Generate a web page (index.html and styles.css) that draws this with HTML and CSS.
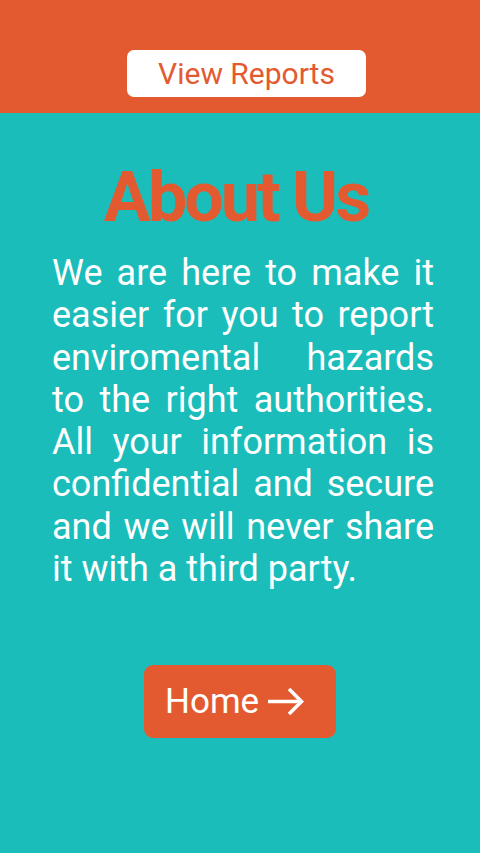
FILE: index.html
```html
<!DOCTYPE html>
<html>
<head>
<meta charset="utf-8">
<link rel="stylesheet" href="styles.css">
</head>
<body>
<header class="top">
  <a class="reports-btn">View Reports</a>
</header>
<main class="content">
  <h1 class="title">About Us</h1>
  <p class="about">We are here to make it easier for you to report enviromental hazards to the right authorities. All your information is confidential and secure and we will never share it with a third party.</p>
  <a class="home-btn">Home
    <svg class="arrow" width="37" height="29" viewBox="0 0 37 29" fill="none" stroke="#fff" stroke-width="3.6" stroke-linecap="butt" stroke-linejoin="miter">
      <path d="M1 14.5 H34"/>
      <path d="M22 2 L34.5 14.5 L22 27"/>
    </svg>
  </a>
</main>
</body>
</html>
```
FILE: styles.css
```css
* { box-sizing: border-box; }
html, body { margin: 0; padding: 0; }
body {
  width: 480px;
  height: 853px;
  background: #1abdba;
  font-family: Roboto, "Noto Sans", sans-serif;
  overflow: hidden;
}
.top {
  background: #e45a30;
  height: 113px;
  display: flex;
  justify-content: center;
  padding-top: 50px;
  padding-left: 13px;
}
.reports-btn {
  display: flex;
  align-items: center;
  justify-content: center;
  width: 239px;
  height: 47px;
  background: #fff;
  border-radius: 7px;
  color: #e45a30;
  font-size: 30px;
}
.content {
  display: flex;
  flex-direction: column;
  align-items: center;
}
.title {
  margin: 43px 0 0;
  padding-right: 8px;
  font-size: 70px;
  font-weight: 700;
  letter-spacing: -3px;
  color: #e45a30;
  line-height: 82px;
}
.about {
  margin: 14px 0 0 6px;
  width: 382px;
  color: #fff;
  font-size: 36px;
  line-height: 42.3px;
  text-align: justify;
}
.home-btn {
  margin-top: 75px;
  width: 192px;
  height: 73px;
  padding-left: 21px;
  background: #e45a30;
  border-radius: 9px;
  color: #fff;
  font-size: 35px;
  display: flex;
  align-items: center;
  gap: 8px;
}
.arrow { display: block; }
```
